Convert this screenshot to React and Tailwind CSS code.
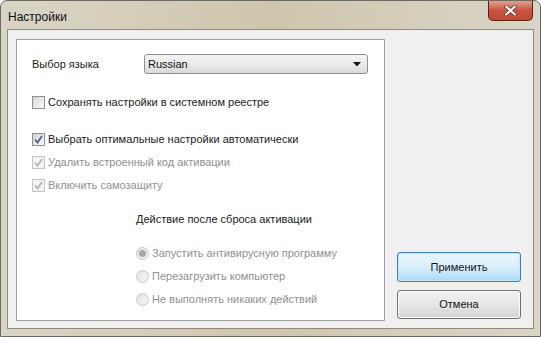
const font = { fontFamily: '"Liberation Sans", Arial, sans-serif' };

function CheckBox({ checked, disabled }) {
  return (
    <span
      className={
        "flex h-[13px] w-[13px] shrink-0 items-center justify-center border " +
        (disabled
          ? "border-[#c4c4c4] bg-[#f4f4f4]"
          : "border-[#8e8f8f] bg-gradient-to-br from-[#d6d6d6] to-[#f8f8f8]")
      }
    >
      {checked && (
        <svg width="9" height="9" viewBox="0 0 9 9">
          <path
            d="M1 4.5 L3.5 7.5 L8 1"
            fill="none"
            stroke={disabled ? "#b4b4b4" : "#4d5e8f"}
            strokeWidth="1.8"
          />
        </svg>
      )}
    </span>
  );
}

function Radio({ checked }) {
  return (
    <span className="flex h-[13px] w-[13px] shrink-0 items-center justify-center rounded-full border border-[#c8c8c8] bg-gradient-to-br from-[#e2e2e2] to-[#f6f6f6]">
      {checked && <span className="h-[7px] w-[7px] rounded-full bg-[#a8a8a8]" />}
    </span>
  );
}

function CheckRow({ checked, disabled, label, className }) {
  return (
    <div className={"flex h-[16px] items-center gap-[3px] " + className}>
      <CheckBox checked={checked} disabled={disabled} />
      <span className={disabled ? "text-[#8f8f8f]" : "text-[#1a1a1a]"}>{label}</span>
    </div>
  );
}

function RadioRow({ checked, label, className }) {
  return (
    <div className={"ml-[104px] flex h-[16px] items-center gap-[3px] " + className}>
      <Radio checked={checked} />
      <span className="text-[#8f8f8f]">{label}</span>
    </div>
  );
}

export default function App() {
  return (
    <div
      className="flex h-[337px] w-[541px] flex-col overflow-hidden rounded-t-[7px] border border-[#6d6a5f] bg-gradient-to-r from-[#d9d5c6] via-[#cfc6ad] to-[#d8d5c8] text-[11px]"
      style={font}
    >
      <div className="flex h-[28px] shrink-0 items-start justify-between">
        <span className="mt-[7px] ml-[7px] text-[12px] text-[#111]">Настройки</span>
        <div className="mr-[7px] flex h-[20px] w-[45px] items-center justify-center rounded-b-[5px] border border-t-0 border-[#5a2219] bg-gradient-to-b from-[#e0a090] via-[#c9533c] to-[#c14a33]">
          <svg width="13" height="11" viewBox="0 0 13 11">
            <path d="M2 1.5 L11 9.5 M11 1.5 L2 9.5" stroke="#6b2a1e" strokeWidth="3.6" strokeLinecap="round" />
            <path d="M2 1.5 L11 9.5 M11 1.5 L2 9.5" stroke="#ffffff" strokeWidth="2.2" strokeLinecap="round" />
          </svg>
        </div>
      </div>
      <div className="mx-[6px] flex h-[300px] border border-[#8d8a7e] bg-[#f0f0f0]">
        <div className="mt-[9px] ml-[8px] h-[282px] w-[369px] border border-[#a0a0a0] bg-white px-[15px]">
          <div className="mt-[14px] flex h-[20px] items-center">
            <span className="w-[112px] text-[#1a1a1a]">Выбор языка</span>
            <div className="flex h-[20px] w-[224px] items-center justify-between rounded-[3px] border border-[#8e8f8f] bg-gradient-to-b from-[#f3f3f3] via-[#ebebeb] to-[#d9d9d9] pr-[6px] pl-[3px]">
              <span className="text-[#111]">Russian</span>
              <svg width="8" height="5" viewBox="0 0 8 5">
                <path d="M0 0 H8 L4 4.5 Z" fill="#111" />
              </svg>
            </div>
          </div>
          <CheckRow className="mt-[20px]" label="Сохранять настройки в системном реестре" />
          <CheckRow className="mt-[21px]" checked label="Выбрать оптимальные настройки автоматически" />
          <CheckRow className="mt-[7px]" checked disabled label="Удалить встроенный код активации" />
          <CheckRow className="mt-[7px]" checked disabled label="Включить самозащиту" />
          <div className="mt-[18px] ml-[104px] flex h-[16px] items-center text-[#1a1a1a]">
            Действие после сброса активации
          </div>
          <RadioRow className="mt-[18px]" checked label="Запустить антивирусную программу" />
          <RadioRow className="mt-[7px]" label="Перезагрузить компьютер" />
          <RadioRow className="mt-[7px]" label="Не выполнять никаких действий" />
        </div>
        <div className="ml-[12px] flex flex-col justify-end pb-[9px]">
          <button className="h-[30px] w-[124px] rounded-[3px] border border-[#3c7fb1] bg-gradient-to-b from-[#eaf6fd] via-[#d9f0fc] to-[#a7d9f5] text-[#111] shadow-[inset_0_0_0_1px_#c5e6f8]">
            Применить
          </button>
          <button className="mt-[8px] h-[29px] w-[124px] rounded-[3px] border border-[#707070] bg-gradient-to-b from-[#f2f2f2] via-[#e6e6e6] to-[#d2d2d2] text-[#111] shadow-[inset_0_0_0_1px_#fbfbfb]">
            Отмена
          </button>
        </div>
      </div>
    </div>
  );
}
